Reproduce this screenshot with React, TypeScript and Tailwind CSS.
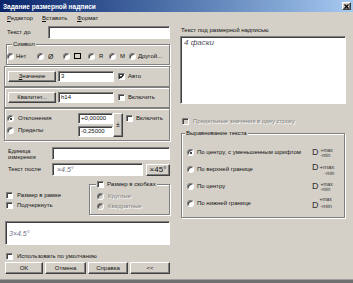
import React from "react";

const sunken =
  "border border-t-[#808080] border-l-[#808080] border-b-white border-r-white shadow-[inset_1px_1px_0_#404040]";
const raised =
  "border border-t-white border-l-white border-b-[#404040] border-r-[#404040] shadow-[inset_-1px_-1px_0_#808080] bg-[#d4d0c8]";
const etched = "border border-[#808080] shadow-[1px_1px_0_#fff,inset_1px_1px_0_#fff]";
const disabledText = "text-[#808080] [text-shadow:1px_1px_0_#fff]";

function Radio({ checked, disabled }: { checked?: boolean; disabled?: boolean }) {
  return (
    <span
      className={`relative inline-block shrink-0 w-[7px] h-[7px] rounded-full ${sunken} ${disabled ? "bg-[#d4d0c8]" : "bg-white"}`}
    >
      {checked && <span className="absolute left-[1.5px] top-[1.5px] w-[2px] h-[2px] rounded-full bg-black" />}
    </span>
  );
}

function Check({ checked, disabled }: { checked?: boolean; disabled?: boolean }) {
  return (
    <span className={`relative inline-block shrink-0 w-[7px] h-[7px] ${sunken} ${disabled ? "bg-[#d4d0c8]" : "bg-white"}`}>
      {checked && (
        <svg viewBox="0 0 5 5" className="absolute left-0 top-0 w-[5px] h-[5px]">
          <path d="M0.6 2.3 L1.9 3.6 L4.4 1" stroke="#000" strokeWidth="1.1" fill="none" />
        </svg>
      )}
    </span>
  );
}

function Btn({ children, className }: { children: React.ReactNode; className: string }) {
  return <div className={`flex items-center justify-center ${raised} ${className}`}>{children}</div>;
}

function Field({ children, className }: { children?: React.ReactNode; className: string }) {
  return <div className={`flex items-center bg-white px-[2px] ${sunken} ${className}`}>{children}</div>;
}

function DMark({ mode }: { mode: "small" | "top" | "center" | "bottom" }) {
  if (mode === "top")
    return (
      <div className="flex items-start text-[#333]">
        <span className="text-[9px] leading-[9px]">D</span>
        <div className="flex flex-col text-[5px] leading-[5px] ml-[1px] items-end">
          <span className="text-[6px] leading-[8px]">+max</span>
          <span>-min</span>
        </div>
      </div>
    );
  if (mode === "bottom")
    return (
      <div className="flex items-end text-[#333]">
        <span className="text-[9px] leading-[9px]">D</span>
        <div className="flex flex-col text-[5px] leading-[5px] ml-[1px] items-end">
          <span>+max</span>
          <span className="text-[6px] leading-[8px]">-min</span>
        </div>
      </div>
    );
  return (
    <div className="flex items-center text-[#333]">
      <span className="text-[9px] leading-[9px]">D</span>
      <div className="flex flex-col text-[5px] leading-[5px] ml-[2px]">
        <span>+max</span>
        <span>-min</span>
      </div>
    </div>
  );
}

export default function App() {
  return (
    <div
      className="w-[353px] h-[283px] flex flex-col bg-[#d4d0c8] text-[6px] leading-[7px] text-[#111] overflow-hidden"
      style={{ fontFamily: '"Liberation Sans", Arial, sans-serif' }}
    >
      {/* Title bar */}
      <div className="h-[12px] flex items-center pl-[3px] pr-[2px] bg-gradient-to-r from-[#0a246a] to-[#a6caf0]">
        <span className="text-white font-bold text-[6.5px]">Задание размерной надписи</span>
        <div className={`ml-auto w-[9px] h-[8px] flex items-center justify-center ${raised}`}>
          <svg viewBox="0 0 5 5" className="w-[5px] h-[5px]">
            <path d="M0.5 0.5 L4.5 4.5 M4.5 0.5 L0.5 4.5" stroke="#000" strokeWidth="1.2" />
          </svg>
        </div>
      </div>

      {/* Menu */}
      <div className="h-[12px] flex items-center pl-[7px]">
        <span className="w-[35px]"><span className="underline">Р</span>едактор</span>
        <span className="w-[35px]"><span className="underline">В</span>ставить</span>
        <span><span className="underline">Ф</span>ормат</span>
      </div>

      {/* Body */}
      <div className="flex-1 flex">
        {/* Left column */}
        <div className="w-[166px] ml-[4px] flex flex-col">
          <div className="mt-[2px] h-[13px] flex items-center">
            <span className="w-[44px] pl-[3px]">Текст до</span>
            <Field className="w-[122px] h-[13px]" />
          </div>

          <div className={`relative mt-[5px] ml-[2px] h-[21px] ${etched} flex items-center`}>
            <span className="absolute left-[5px] -top-[4px] px-[1px] bg-[#d4d0c8]">Символ</span>
            <div className="flex items-center mt-[3px]">
              <div className="w-[30px] flex items-center gap-[2px]"><Radio /><span>Нет</span></div>
              <div className="w-[26px] flex items-center gap-[4px]"><Radio /><span className="text-[7px]">Ø</span></div>
              <div className="w-[25px] flex items-center gap-[4px]"><Radio /><span className="inline-block w-[7px] h-[6px] border border-black" /></div>
              <div className="w-[21px] flex items-center gap-[4px]"><Radio /><span>R</span></div>
              <div className="w-[20px] flex items-center gap-[4px]"><Radio /><span>M</span></div>
              <div className="flex items-center gap-[2px]"><Radio /><span>Другой...</span></div>
            </div>
          </div>

          <div className={`mt-[1px] h-[21px] ${etched} flex items-center pl-[3px]`}>
            <Btn className="w-[48px] h-[11px]"><span><span className="underline">З</span>начение</span></Btn>
            <Field className="ml-[2px] w-[56px] h-[11px]">3</Field>
            <div className="ml-[4px] flex items-center gap-[3px]"><Check checked /><span>Авто</span></div>
          </div>

          <div className={`h-[21px] ${etched} flex items-center pl-[3px]`}>
            <Btn className="w-[48px] h-[11px]"><span>Квалитет...</span></Btn>
            <Field className="ml-[2px] w-[56px] h-[11px]">h14</Field>
            <div className="ml-[4px] flex items-center gap-[3px]"><Check /><span>Включить</span></div>
          </div>

          <div className={`h-[33px] ${etched} flex items-center pl-[2px]`}>
            <div className="w-[71px] flex flex-col gap-[5px]">
              <div className="flex items-center gap-[4px]"><Radio checked /><span>Отклонения</span></div>
              <div className="flex items-center gap-[4px]"><Radio /><span>Пределы</span></div>
            </div>
            <div className="flex flex-col gap-[2px]">
              <Field className="w-[35px] h-[11px]">+0,00000</Field>
              <Field className="w-[35px] h-[11px]">-0,25000</Field>
            </div>
            <Btn className="w-[10px] h-[24px] text-[7px]">±</Btn>
            <div className="self-start mt-[6px] ml-[3px] flex items-center gap-[3px]"><Check /><span>Включить</span></div>
          </div>

          <div className="mt-[5px] h-[15px] flex items-center">
            <span className="w-[48px] pl-[4px] text-[5.5px] leading-[6px]">Единица<br />измерения</span>
            <Field className="w-[118px] h-[13px]" />
          </div>

          <div className="mt-[2px] h-[13px] flex items-center">
            <span className="w-[48px] pl-[4px]">Текст после</span>
            <Field className="w-[91px] h-[13px] italic text-[#6c6c80] text-[7px] pl-[4px]">×4.5°</Field>
            <Btn className="ml-[3px] w-[24px] h-[12px] text-[8px]">×45°</Btn>
          </div>

          <div className="mt-[8px] h-[32px] flex">
            <div className="w-[85px] flex flex-col gap-[3px] pt-[8px] pl-[2px]">
              <div className="flex items-center gap-[4px]"><Check /><span>Размер в рамке</span></div>
              <div className="flex items-center gap-[4px]"><Check /><span>Подчеркнуть</span></div>
            </div>
            <div className={`relative w-[81px] h-[31px] ${etched} flex flex-col gap-[3px] pt-[8px] pl-[7px]`}>
              <div className="absolute left-[6px] -top-[4px] px-[1px] bg-[#d4d0c8] flex items-center gap-[3px]">
                <Check /><span>Размер в скобках</span>
              </div>
              <div className="flex items-center gap-[4px]"><Radio disabled /><span className={disabledText}>Круглые</span></div>
              <div className="flex items-center gap-[4px]"><Radio disabled /><span className={disabledText}>Квадратные</span></div>
            </div>
          </div>

          <div className={`mt-[5px] ml-[1px] h-[24px] bg-white ${sunken} flex items-center pl-[3px]`}>
            <span className="italic text-[#70708a] text-[7px]">3×4.5°</span>
          </div>

          <div className="mt-[6px] h-[10px] flex items-center gap-[4px] pl-[2px]">
            <Check /><span>Использовать по умолчанию</span>
          </div>

          <div className="mt-[1px] h-[12px] flex gap-[2px] pl-[1px]">
            <Btn className="w-[38px] h-[12px]">OK</Btn>
            <Btn className="w-[41px] h-[12px]">Отмена</Btn>
            <Btn className="w-[40px] h-[12px]">Справка</Btn>
            <Btn className="w-[40px] h-[12px]">&lt;&lt;</Btn>
          </div>
        </div>

        {/* Right column */}
        <div className="w-[166px] ml-[10px] flex flex-col">
          <div className="mt-[2px] h-[9px] pl-[1px] flex items-center">Текст под размерной надписью</div>
          <div className={`mt-[1px] h-[68px] bg-white ${sunken} pl-[3px] pt-[2px]`}>
            <span className="italic text-[#505060] text-[8px]">4 фаски</span>
          </div>

          <div className="mt-[12px] h-[10px] flex items-center gap-[4px] pl-[2px]">
            <Check disabled /><span className={disabledText}>Предельные значения в одну строку</span>
          </div>

          <div className={`relative mt-[7px] ml-[1px] w-[164px] h-[85px] ${etched} pt-[10px] flex flex-col`}>
            <span className="absolute left-[3px] -top-[4px] px-[1px] bg-[#d4d0c8]">Выравнивание текста</span>
            <div className="h-[17px] flex items-center pl-[5px]">
              <Radio checked /><span className="ml-[3px]">По центру, с уменьшенным шрифтом</span>
              <div className="ml-auto w-[32px]"><DMark mode="small" /></div>
            </div>
            <div className="h-[17px] flex items-center pl-[5px]">
              <Radio /><span className="ml-[3px]">По верхней границе</span>
              <div className="ml-auto w-[32px]"><DMark mode="top" /></div>
            </div>
            <div className="h-[17px] flex items-center pl-[5px]">
              <Radio /><span className="ml-[3px]">По центру</span>
              <div className="ml-auto w-[32px]"><DMark mode="center" /></div>
            </div>
            <div className="h-[17px] flex items-center pl-[5px]">
              <Radio /><span className="ml-[3px]">По нижней границе</span>
              <div className="ml-auto w-[32px]"><DMark mode="bottom" /></div>
            </div>
          </div>
        </div>
      </div>

      <div className="h-[4px] bg-[#707070] border-t border-[#a0a0a0]" />
    </div>
  );
}
